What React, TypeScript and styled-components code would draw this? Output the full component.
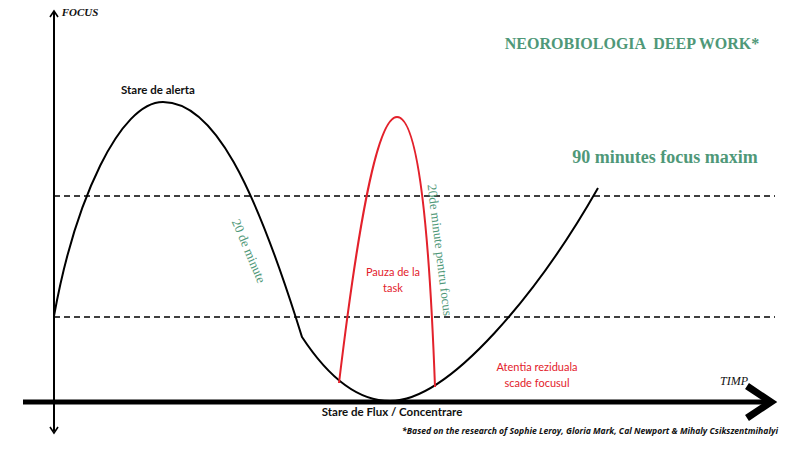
import styled, { createGlobalStyle } from "styled-components";

const GREEN = "#4f9878";
const RED = "#e3212b";

function App() {
  return (
    <>
      <GlobalStyle />
      <Canvas>
        <Chart viewBox="0 0 800 450" width={800} height={450}>
          {/* focus axis */}
          <line x1="54" y1="12" x2="54" y2="431" stroke="#000" strokeWidth="2" />
          <polyline points="50,17 54,11 58,17" fill="none" stroke="#000" strokeWidth="1.6" />
          <polyline points="50,427 54,433 58,427" fill="none" stroke="#000" strokeWidth="1.6" />

          {/* thresholds */}
          <line x1="54" y1="196" x2="775" y2="196" stroke="#000" strokeWidth="1.4" strokeDasharray="6 4" />
          <line x1="54" y1="317" x2="775" y2="317" stroke="#000" strokeWidth="1.4" strokeDasharray="6 4" />

          {/* focus curve */}
          <path
            d="M54 316 C75 200 120 102 163 102 C215 102 255 190 296 318 L302 337 C325 372 355 401 390 401 C450 401 540 290 598 188"
            fill="none"
            stroke="#000"
            strokeWidth="2"
          />

          {/* pause curve */}
          <path
            d="M339 383 C355 250 375 117 397 117 C420 117 430 250 435 387"
            fill="none"
            stroke={RED}
            strokeWidth="2"
          />

          {/* time axis */}
          <line x1="23" y1="402" x2="768" y2="402" stroke="#000" strokeWidth="5" />
          <polyline points="747,386 771,402 747,418" fill="none" stroke="#000" strokeWidth="7" strokeLinejoin="miter" />
        </Chart>

        <Title $x={632} $y={44}>NEOROBIOLOGIA  DEEP WORK*</Title>
        <Subtitle $x={665} $y={157}>90 minutes focus maxim</Subtitle>

        <AxisLabel $x={80} $y={12} $bold>FOCUS</AxisLabel>
        <AxisLabel $x={734} $y={381}>TIMP</AxisLabel>

        <StateLabel $x={158} $y={90}>Stare de alerta</StateLabel>
        <StateLabel $x={392} $y={412}>Stare de Flux / Concentrare</StateLabel>

        <PhaseNote $x={393} $y={280}>
          Pauza de la
          <br />
          task
        </PhaseNote>
        <PhaseNote $x={537} $y={375}>
          Atentia reziduala
          <br />
          scade focusul
        </PhaseNote>

        <SlopeNote $x={249} $y={251} $angle={67}>20 de minute</SlopeNote>
        <SlopeNote $x={440} $y={250} $angle={83}>20de minute pentru focus</SlopeNote>

        <Footnote $x={590} $y={431}>
          *Based on the research of Sophie Leroy, Gloria Mark, Cal Newport &amp; Mihaly Csikszentmihalyi
        </Footnote>
      </Canvas>
    </>
  );
}

const GlobalStyle = createGlobalStyle`
  html, body {
    margin: 0;
    padding: 0;
    background: #fff;
  }
`;

const Canvas = styled.div`
  position: relative;
  width: 800px;
  height: 450px;
  overflow: hidden;
  background: #fff;
`;

const Chart = styled.svg`
  display: block;
`;

// labels sit on the diagram at their centre point
const Label = styled.div<{ $x: number; $y: number }>`
  position: absolute;
  left: ${(p) => p.$x}px;
  top: ${(p) => p.$y}px;
  transform: translate(-50%, -50%);
  white-space: pre;
  line-height: 1;
`;

const Title = styled(Label)`
  font-family: "Liberation Serif", "DejaVu Serif", serif;
  font-weight: 700;
  font-size: 16px;
  color: ${GREEN};
`;

const Subtitle = styled(Label)`
  font-family: "Liberation Serif", "DejaVu Serif", serif;
  font-weight: 700;
  font-size: 18px;
  color: ${GREEN};
`;

const AxisLabel = styled(Label)<{ $bold?: boolean }>`
  font-family: "Liberation Serif", serif;
  font-style: italic;
  font-weight: ${(p) => (p.$bold ? 700 : 400)};
  font-size: ${(p) => (p.$bold ? 11 : 12)}px;
  color: #111;
`;

const StateLabel = styled(Label)`
  font-family: Lato, "Open Sans", sans-serif;
  font-weight: 700;
  font-size: 11.5px;
  color: #111;
`;

const PhaseNote = styled(Label)`
  font-family: Lato, "Open Sans", sans-serif;
  font-size: 11px;
  line-height: 16px;
  text-align: center;
  color: ${RED};
`;

const SlopeNote = styled(Label)<{ $angle: number }>`
  transform: translate(-50%, -50%) rotate(${(p) => p.$angle}deg);
  font-family: "Liberation Serif", serif;
  font-size: 13px;
  color: ${GREEN};
`;

const Footnote = styled(Label)`
  font-family: "Open Sans", sans-serif;
  font-style: italic;
  font-weight: 700;
  font-size: 8.6px;
  color: #111;
`;

export default App;
